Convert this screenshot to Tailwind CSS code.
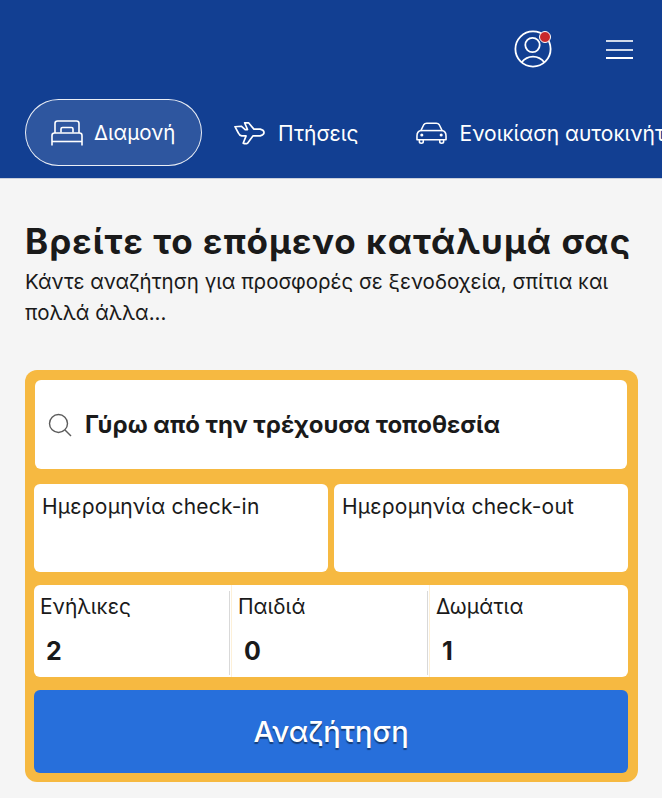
<!DOCTYPE html>
<html lang="el">
<head>
    <meta charset="UTF-8">
    <meta name="viewport" content="width=device-width, initial-scale=1.0">
    <title>Διαμονή</title>
    <script src="https://cdn.jsdelivr.net/npm/@tailwindcss/browser@4"></script>
</head>
<body class="bg-[#f5f5f5] font-['Inter',sans-serif] text-[#1a1a1a] w-[662px] h-[798px] overflow-hidden">
    <!-- Header -->
    <header class="bg-[#123f92] h-[179px] border-b border-[#c9cfdc] overflow-hidden">
        <div class="flex justify-end items-center h-[99px] pr-[29px] gap-[54px]">
            <div class="relative w-[38px] h-[38px] -mt-[1px]">
                <svg viewBox="0 0 38 38" class="w-[38px] h-[38px]" fill="none" stroke="white" stroke-width="1.8">
                    <circle cx="19" cy="19" r="17.6"/>
                    <circle cx="18.5" cy="15" r="7.2"/>
                    <path d="M7.5 32.5 C11 28 15 26.6 19 26.6 C23 26.6 27 28 30.5 32.5"/>
                </svg>
                <span class="absolute top-[1px] right-[1px] w-[12px] h-[12px] rounded-full bg-[#c9282b] border border-white"></span>
            </div>
            <div class="flex flex-col gap-[6.5px] w-[27px]">
                <span class="h-[2px] bg-white/80"></span>
                <span class="h-[2px] bg-white/80"></span>
                <span class="h-[2px] bg-white"></span>
            </div>
        </div>
        <nav class="flex items-center pl-[25px] text-white text-[21px] whitespace-nowrap">
            <a class="shrink-0 flex items-center h-[67px] w-[177px] pl-[25px] gap-[11px] rounded-full border-[1.5px] border-white/90 bg-white/12">
                <svg viewBox="0 0 32 26" class="w-[32px] h-[26px]" fill="none" stroke="white" stroke-width="1.6">
                    <path d="M4 13 V3.5 Q4 1 6.5 1 H25.5 Q28 1 28 3.5 V13"/>
                    <path d="M10 12.5 V9 Q10 7.5 11.5 7.5 H20.5 Q22 7.5 22 9 V12.5"/>
                    <path d="M1 25.5 V15.5 Q1 13 3.5 13 H28.5 Q31 13 31 15.5 V25.5"/>
                    <path d="M1 21.5 H31"/>
                </svg>
                <span class="text-[20.5px] pt-[2px]">Διαμονή</span>
            </a>
            <a class="shrink-0 flex items-center ml-[32px] gap-[13px]">
                <svg viewBox="0 0 32 24" class="w-[31px] h-[24px]" fill="none" stroke="white" stroke-width="1.7" stroke-linejoin="round">
                    <path d="M1 5.5 L7.5 5 L11.5 8.5 L14 8.5 L11 1.5 L15 1.5 L20.5 8 L27 8 Q31 9 31 11.5 Q31 14 27 15 L19.5 15 L14 22.5 Q12 23.5 9.5 22.5 L12.5 15 L8 15 Q5.5 14.5 4.5 12 Z"/>
                </svg>
                <span class="pt-[2px]">Πτήσεις</span>
            </a>
            <a class="shrink-0 flex items-center ml-[57px] gap-[13px]">
                <svg viewBox="0 0 32 22" class="w-[31px] h-[22px]" fill="none" stroke="white" stroke-width="1.6" stroke-linejoin="round">
                    <path d="M1 14 Q1 9.5 5 8.5 L8 2.5 Q9 1 11 1 H21 Q23 1 24 2.5 L27 8.5 Q31 9.5 31 14 V18 H1 Z"/>
                    <path d="M5 8.5 H27"/>
                    <path d="M3.5 18 V20 Q3.5 21.5 5.5 21.5 Q7.5 21.5 7.5 20 V18 M24.5 18 V20 Q24.5 21.5 26.5 21.5 Q28.5 21.5 28.5 20 V18"/>
                    <circle cx="6" cy="13" r="0.8"/>
                    <circle cx="26" cy="13" r="0.8"/>
                </svg>
                <span class="pt-[2px]">Ενοικίαση αυτοκινήτου</span>
            </a>
        </nav>
    </header>

    <main class="px-[25px]">
        <h1 class="mt-[40px] text-[35px] leading-[44px] font-bold tracking-[1px] whitespace-nowrap">Βρείτε το επόμενο κατάλυμά σας</h1>
        <p class="mt-[3px] text-[20.5px] leading-[31px] w-[600px]">Κάντε αναζήτηση για προσφορές σε ξενοδοχεία, σπίτια και πολλά άλλα...</p>

        <!-- Search form -->
        <form class="mt-[42px] w-[613px] h-[412px] bg-[#f6b941] rounded-[12px] pt-[10px] px-[9px]">
            <div class="ml-px mr-[2px] h-[89px] bg-white rounded-[6px] flex items-center pl-[13px] gap-[13px]">
                <svg viewBox="0 0 24 24" class="w-[24px] h-[24px] text-[#5c5c5c]" fill="none" stroke="currentColor" stroke-width="1.4">
                    <circle cx="10.5" cy="10.5" r="9"/>
                    <path d="M17 17 L23 23"/>
                </svg>
                <span class="text-[24px] pt-px font-bold whitespace-nowrap">Γύρω από την τρέχουσα τοποθεσία</span>
            </div>
            <div class="mt-[15px] flex gap-[6px]">
                <div class="w-[294px] h-[88px] bg-white rounded-[6px] px-[8px] pt-[9px] text-[21px] tracking-[0.2px] leading-[28px]">Ημερομηνία check-in</div>
                <div class="w-[294px] h-[88px] bg-white rounded-[6px] px-[8px] pt-[9px] text-[21px] tracking-[0.2px] leading-[28px]">Ημερομηνία check-out</div>
            </div>
            <div class="mt-[13px] w-[594px] h-[92px] bg-white rounded-[6px] flex">
                <div class="w-[198px] pl-[6px] pt-[8px] border-r border-[#fdf0d8] relative">
                    <span class="absolute right-[1px] top-[6px] bottom-[2px] w-[1px] bg-[#d9d9d9]"></span>
                    <div class="text-[21px] leading-[28px]">Ενήλικες</div>
                    <div class="pl-[6px] mt-[15px] text-[25px] leading-[30px] font-bold">2</div>
                </div>
                <div class="w-[198px] pl-[6px] pt-[8px] border-r border-[#fdf0d8] relative">
                    <span class="absolute right-[1px] top-[6px] bottom-[2px] w-[1px] bg-[#d9d9d9]"></span>
                    <div class="text-[21px] leading-[28px]">Παιδιά</div>
                    <div class="pl-[6px] mt-[15px] text-[25px] leading-[30px] font-bold">0</div>
                </div>
                <div class="flex-1 pl-[6px] pt-[8px]">
                    <div class="text-[21px] tracking-[0.2px] leading-[28px]">Δωμάτια</div>
                    <div class="pl-[6px] mt-[15px] text-[25px] leading-[30px] font-bold">1</div>
                </div>
            </div>
            <button type="button" class="mt-[13px] w-[594px] h-[83px] bg-[#276fdb] rounded-[6px] text-white text-[29px] font-medium [text-shadow:0_2px_1px_rgba(0,0,0,0.45)]">Αναζήτηση</button>
        </form>
    </main>
</body>
</html>
